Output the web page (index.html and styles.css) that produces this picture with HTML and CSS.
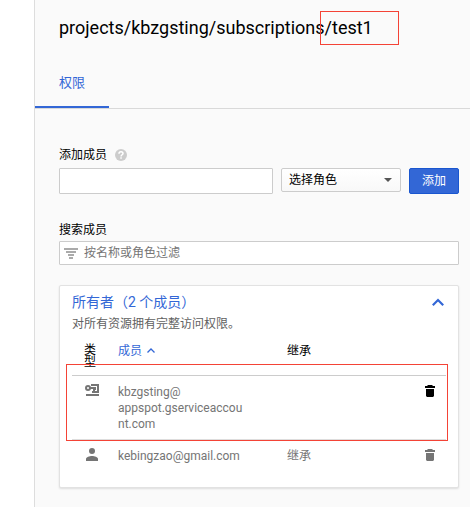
FILE: index.html
```html
<!DOCTYPE html>
<html lang="zh-CN">
<head>
<meta charset="utf-8">
<title>projects/kbzgsting/subscriptions/test1</title>
<link rel="stylesheet" href="styles.css">
</head>
<body>
<main class="page">
  <h1 class="title">projects/kbzgsting/subscriptions/test1<span class="mark mark-title"></span></h1>
  <nav class="tabs"><a class="tab" href="#permissions">权限</a></nav>
  <div class="content" id="permissions">
    <div class="label-row">
      <label for="member">添加成员</label>
      <svg class="help" viewBox="0 0 12 12"><circle cx="6" cy="6" r="6" fill="#ccc"/><path d="M4 4.700C4 3.400 4.900 2.700 6 2.700s2 .7 2 1.800C8 5.700 6.100 5.900 6.100 7.400" fill="none" stroke="#fff" stroke-width="1.500"/><path d="M5.300 8.300h1.500v1.500H5.300z" fill="#fff"/></svg>
    </div>
    <div class="add-row">
      <input class="field member-input" id="member" type="text">
      <select class="role" aria-label="选择角色"><option>选择角色</option></select>
      <button class="add" type="button">添加</button>
    </div>
    <div class="label-row"><label for="search">搜索成员</label></div>
    <div class="search field">
      <svg class="filter" viewBox="0 0 14 11"><path d="M0 0h14v2H0zM2 3h10v2H2zM4 6h6v2H4zM5 9h4v2H5z" fill="#aaa"/></svg>
      <input class="search-input" id="search" type="text" placeholder="按名称或角色过滤">
    </div>
    <section class="card">
      <header class="card-head">
        <h2 class="card-title">所有者（2 个成员）</h2>
        <button class="icon-button" type="button" aria-label="收起"><svg class="chevron" viewBox="0 0 12 8"><path d="M.8 7.200L6 2l5.200 5.200" fill="none" stroke="#3367d6" stroke-width="2.200"/></svg></button>
      </header>
      <p class="card-text">对所有资源拥有完整访问权限。</p>
      <div class="table-wrap">
        <table class="members">
          <colgroup><col class="col-type"><col class="col-member"><col><col class="col-action"></colgroup>
          <thead>
            <tr><th class="type">类型</th><th class="sorted">成员<svg class="sort" viewBox="0 0 8 5"><path d="M.5 4.500L4 1l3.500 3.500" fill="none" stroke="#3367d6" stroke-width="1.300"/></svg></th><th>继承</th><th></th></tr>
          </thead>
          <tbody>
            <tr>
              <td class="type"><svg class="key" viewBox="0 0 14 12"><path d="M6 0h8v9H7V7h5V2H6zM1 10h13v2H1z"/><circle cx="3" cy="4" r="2" fill="none" stroke="#757575" stroke-width="2"/><path d="M4 3h7v3h-1v1H8V5H4z"/></svg></td>
              <td>kbzgsting@<br>appspot.gserviceaccou<br>nt.com</td><td></td>
              <td class="action"><button class="icon-button" type="button" aria-label="删除 kbzgsting"><svg class="trash dark" viewBox="0 0 10 12"><path d="M3 0h4l1 1h2v2H0V1h2zM1 4h8v7l-1 1H2l-1-1z"/></svg></button></td>
            </tr>
            <tr>
              <td class="type"><svg class="person" viewBox="0 0 12 13"><circle cx="6" cy="3" r="3"/><path d="M0 13v-2c0-2 3.500-3 6-3s6 1 6 3v2z"/></svg></td>
              <td>kebingzao@gmail.com</td><td>继承</td>
              <td class="action"><button class="icon-button" type="button" aria-label="删除 kebingzao"><svg class="trash" viewBox="0 0 10 12"><path d="M3 0h4l1 1h2v2H0V1h2zM1 4h8v7l-1 1H2l-1-1z"/></svg></button></td>
            </tr>
          </tbody>
        </table>
        <span class="mark mark-row"></span>
      </div>
    </section>
  </div>
</main>
</body>
</html>
```
FILE: styles.css
```css
* { box-sizing: border-box; }
body {
  margin: 0;
  background: #fff;
  color: #212121;
  font: 12px/16px Roboto, "Noto Sans CJK SC", sans-serif;
}
input, select, button { font: inherit; }
svg { display: block; fill: #757575; }
.page {
  min-height: 100vh;
  margin-left: 34px;
  border-left: 1px solid #ddd;
  background: #fafafa;
}
.title {
  position: relative;
  margin: 0;
  padding: 16px 0 0 24px;
  font-size: 18px;
  font-weight: 400;
  line-height: 24px;
  white-space: nowrap;
  color: #000;
}
.mark {
  position: absolute;
  border: 1px solid #f44336;
  pointer-events: none;
}
.mark-title { left: 285px; top: 11px; width: 79px; height: 34px; }
.mark-row { left: -6px; right: -2px; top: 22px; height: 77px; }
.tabs {
  display: flex;
  margin-top: 18px;
  border-bottom: 1px solid #d9d9d9;
}
.tab {
  padding: 1px 24px 0;
  border-bottom: 2px solid #3367d6;
  font-size: 13px;
  line-height: 47px;
  color: #3367d6;
  text-decoration: none;
}
.content { padding: 38px 11px 19px 24px; }
.label-row {
  display: flex;
  align-items: center;
  gap: 8px;
  height: 16px;
  color: #000;
}
.help { width: 12px; height: 12px; }
.field {
  border: 1px solid #ccc;
  border-radius: 1px;
  background: #fff;
}
.add-row {
  display: flex;
  align-items: flex-start;
  gap: 8px;
  margin: 5px 0 28px;
}
.member-input { flex: 1; min-width: 0; height: 26px; }
.role {
  appearance: none;
  width: 120px;
  height: 24px;
  padding: 0 7px;
  border: 1px solid #ccc;
  border-radius: 2px;
  background: url("data:image/svg+xml,%3Csvg xmlns='http://www.w3.org/2000/svg' width='8' height='4'%3E%3Cpath d='M0 0h8L4 4z' fill='%23555'/%3E%3C/svg%3E") no-repeat right 8px center, linear-gradient(#fff, #f8f8f8);
  color: #000;
}
.add {
  width: 50px;
  height: 26px;
  padding: 0;
  border: 1px solid #1a56cf;
  border-radius: 2px;
  background: #3367d6;
  color: #fff;
}
.search {
  display: flex;
  align-items: center;
  gap: 6px;
  height: 24px;
  margin: 3px 0 20px;
  padding: 0 4px;
}
.filter { width: 14px; height: 11px; }
.search-input {
  flex: 1;
  min-width: 0;
  padding: 0;
  border: 0;
  outline: 0;
  background: none;
}
.search-input::placeholder { color: #757575; }
.card {
  padding: 7px 12px 16px;
  border: 1px solid #e2e2e2;
  border-radius: 2px;
  background: #fff;
  box-shadow: 0 1px 2px #ddd;
}
.card-head {
  display: flex;
  align-items: center;
  justify-content: space-between;
}
.card-title {
  margin: 0;
  font-size: 14px;
  font-weight: 400;
  line-height: 18px;
  color: #3367d6;
}
.icon-button { display: block; padding: 0; border: 0; background: none; }
.card-head .icon-button { margin-right: 2px; }
.chevron { width: 12px; height: 8px; }
.card-text { margin: 5px 0 10px; color: #616161; }
.table-wrap { position: relative; }
.members {
  width: 100%;
  border-collapse: separate;
  border-spacing: 0;
  table-layout: fixed;
}
.col-type { width: 46px; }
.col-member { width: 169px; }
.col-action { width: 24px; }
.members th, .members td {
  padding: 0;
  font-weight: 400;
  text-align: left;
  vertical-align: top;
}
.members th {
  height: 34px;
  padding-top: 1px;
  border-bottom: 1px solid #ccc;
  color: #000;
}
.members th.type { padding: 2px 22px 6px 12px; line-height: 12px; }
.members th.sorted { color: #3367d6; }
.members td {
  padding: 8px 0 7px;
  color: #757575;
}
.members tbody tr + tr td { border-top: 1px solid #ddd; }
.members td.type { padding-left: 13px; }
.sort { display: inline-block; width: 8px; height: 5px; margin: 0 0 2px 5px; }
.key { width: 14px; height: 12px; }
.person { width: 12px; height: 13px; margin-left: 1px; }
.action .icon-button { margin: 1px 0 0 3px; }
.trash { width: 10px; height: 12px; }
.dark { fill: #000; }
```
